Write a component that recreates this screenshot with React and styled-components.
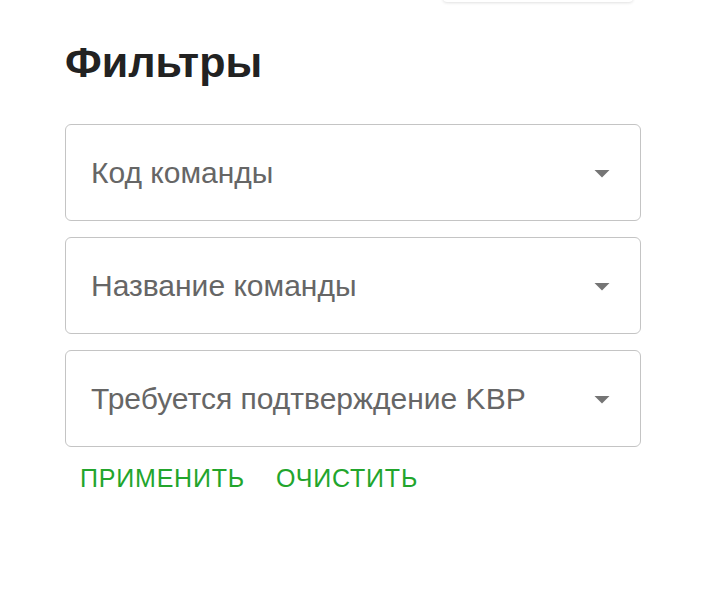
import styled, { createGlobalStyle } from 'styled-components';

const GlobalStyle = createGlobalStyle`
  body {
    margin: 0;
    background: #fff;
    font-family: 'Liberation Sans', Arial, sans-serif;
  }
`;

const Page = styled.div`
  width: 728px;
  height: 610px;
  overflow: hidden;
  position: relative;
`;

const TopShadow = styled.div`
  position: absolute;
  top: -20px;
  left: 443px;
  width: 190px;
  height: 22px;
  background: #fff;
  box-shadow: 0 1px 3px rgba(0, 0, 0, 0.12);
  border-radius: 4px;
`;

const Panel = styled.div`
  padding: 37px 87px 0 65px;
  display: flex;
  flex-direction: column;
`;

const Title = styled.h2`
  margin: 0 0 36px;
  font-size: 43px;
  line-height: 51px;
  font-weight: 700;
  color: #222;
`;

const Fields = styled.div`
  display: flex;
  flex-direction: column;
  gap: 16px;
`;

const Select = styled.div`
  box-sizing: border-box;
  height: 97px;
  border: 1px solid #c4c4c4;
  border-radius: 6px;
  display: flex;
  align-items: center;
  justify-content: space-between;
  padding: 0 20px 0 25px;
`;

const Label = styled.span`
  font-size: 30px;
  color: #666;
`;

const Arrow = styled.svg`
  width: 36px;
  height: 36px;
  fill: #757575;
`;

const Actions = styled.div`
  display: flex;
  gap: 31px;
  padding: 13px 0 0 15px;
`;

const TextButton = styled.button`
  border: none;
  background: none;
  padding: 0;
  font-family: inherit;
  font-size: 25px;
  line-height: 36px;
  letter-spacing: 0.8px;
  color: #22a52c;
  cursor: pointer;
`;

const fields = ['Код команды', 'Название команды', 'Требуется подтверждение KBP'];

const App = () => (
  <Page>
    <GlobalStyle />
    <TopShadow />
    <Panel>
      <Title>Фильтры</Title>
      <Fields>
        {fields.map((f) => (
          <Select key={f}>
            <Label>{f}</Label>
            <Arrow viewBox="0 0 24 24">
              <path d="M7 10l5 5 5-5z" />
            </Arrow>
          </Select>
        ))}
      </Fields>
      <Actions>
        <TextButton>ПРИМЕНИТЬ</TextButton>
        <TextButton>ОЧИСТИТЬ</TextButton>
      </Actions>
    </Panel>
  </Page>
);

export default App;
